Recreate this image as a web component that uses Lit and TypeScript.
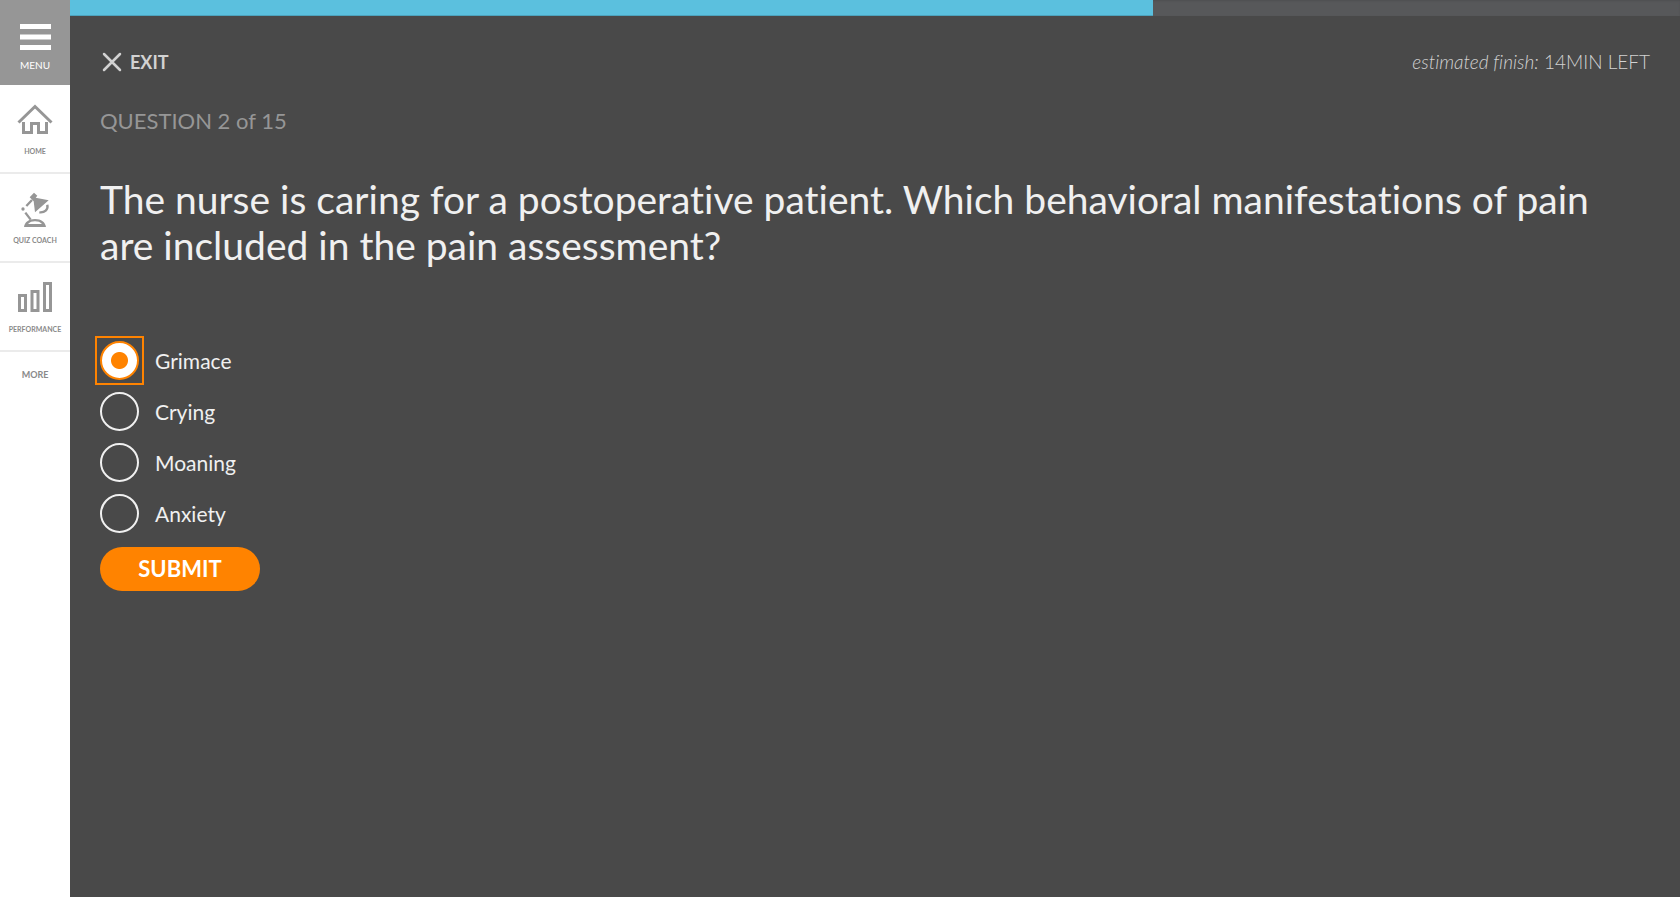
import { LitElement, html, css, svg } from "lit";
import { customElement, property, state } from "lit/decorators.js";
import { styleMap } from "lit/directives/style-map.js";

const homeIcon = svg`<svg width="36" height="32" viewBox="0 0 36 32" fill="none" stroke="#969696">
  <path stroke-width="3" d="M1.5 19.5 18 3.5 34.5 19.5"/>
  <path stroke-width="3" d="M6.5 19V29.500H14.500V20.500H21.500V29.500H29.500V19"/>
</svg>`;

const lampIcon = svg`<svg width="30" height="36" viewBox="60 60 90 108" fill="#969696">
  <path d="M89 76 102 62 112 71 107 77 146 85 105 121 101 88 95 82Z"/>
  <path fill="none" stroke="#969696" stroke-width="7" d="M142 98C145 113 134 123 118 121"/>
  <path fill="none" stroke="#969696" stroke-width="7" d="M96 84 79 102M76 122 92 143"/>
  <circle cx="69" cy="111" r="5"/>
  <path fill-rule="evenodd" d="M72 165C74 150 86 141 105 141S136 150 138 165ZM84 156H126C120 150 114 148 105 148S90 150 84 156Z"/>
</svg>`;

const barsIcon = svg`<svg width="36" height="32" viewBox="0 0 36 32" fill="none" stroke="#969696" stroke-width="3">
  <path d="M2.500 14.500H8.500V29.500H2.500ZM15 10.500H21V29.500H15ZM27.500 2.500H33.500V29.500H27.500Z"/>
</svg>`;

@customElement("side-nav")
class SideNav extends LitElement {
  static styles = css`
    :host { display: flex; flex-direction: column; background: #fff; color: #8a8a8a; }
    .menu {
      display: flex; flex-direction: column; align-items: center;
      height: 85px; padding: 24px 0 0; border: 0;
      background: #969696; color: #fff;
      font: 10px/16px Lato, sans-serif; gap: 6px; cursor: pointer;
    }
    .item {
      display: flex; flex-direction: column; align-items: center; justify-content: space-between;
      box-sizing: border-box; height: 89px; padding: 18px 0 16px;
      border-bottom: 2px solid #ebebeb;
      color: inherit; text-decoration: none;
      font: 700 7px/10px Lato, sans-serif; white-space: nowrap;
    }
    .item:first-of-type { padding-bottom: 16px; }
    .more {
      padding: 15px 0; border: 0; background: none; color: inherit;
      font: 700 9px/16px Lato, sans-serif; cursor: pointer;
    }
    svg { display: block; }
  `;
  render() {
    return html`
      <button class="menu">
        <svg width="31" height="27" viewBox="0 0 31 27" fill="#fff">
          <path d="M0 0H31V5H0ZM0 10.500H31V15.500H0ZM0 21H31V26H0Z"/>
        </svg>
        MENU
      </button>
      <a class="item" href="#home">${homeIcon}HOME</a>
      <a class="item" href="#coach">${lampIcon}QUIZ COACH</a>
      <a class="item" href="#performance">${barsIcon}PERFORMANCE</a>
      <button class="more">MORE</button>
    `;
  }
}

@customElement("quiz-progress")
class QuizProgress extends LitElement {
  @property({ type: Number }) value = 0;
  static styles = css`
    :host { display: block; height: 16px; background: #57585a; box-shadow: inset 0 1px 2px rgba(0, 0, 0, 0.1); }
    .bar { height: 100%; background: #5bc0de; box-shadow: inset 0 -1px 0 rgba(0, 0, 0, 0.15); }
  `;
  render() {
    return html`<div class="bar" style=${styleMap({ width: `${this.value}%` })}></div>`;
  }
}

@customElement("app-root")
class AppRoot extends LitElement {
  @state() private selected = "Grimace";
  private options = ["Grimace", "Crying", "Moaning", "Anxiety"];

  static styles = css`
    :host {
      display: grid; grid-template-columns: 70px minmax(0, 1fr);
      min-height: 100vh; background: #494949; color: #f0f0f0;
      font-family: Lato, sans-serif; font-variant-ligatures: none;
    }
    .content { padding: 30px 30px 40px; }
    .top { display: flex; justify-content: space-between; align-items: center; height: 32px; }
    .exit {
      display: flex; align-items: center; gap: 8px; padding: 0 2px; border: 0;
      background: none; color: #d2d2d2; font: 700 18px/24px Lato, sans-serif; cursor: pointer;
    }
    .time { color: #d2d2d2; font-size: 19px; line-height: 24px; font-weight: 300; }
    .count { margin: 28px 0 0; color: #969696; font-size: 22px; line-height: 30px; font-weight: 400; }
    .question { margin: 40px 0 0; font-size: 39px; line-height: 46px; font-weight: 400; }
    .options { display: grid; gap: 12px; margin: 73px 0 14px; padding: 0; border: 0; justify-content: start; }
    .option { display: flex; align-items: center; gap: 16px; font-size: 21px; line-height: 24px; cursor: pointer; }
    .ring { display: flex; }
    .ring:has(.radio:checked) { outline: 2px solid #ff8300; outline-offset: 3px; }
    .radio {
      appearance: none; box-sizing: border-box; width: 39px; height: 39px; margin: 0;
      border: 2px solid #f0f0f0; border-radius: 50%; outline: none; cursor: pointer;
    }
    .radio:checked {
      border-color: #ff8300;
      background: radial-gradient(circle, #ff8300 8px, #fff 9px);
    }
    .submit {
      display: block; width: 160px; height: 44px; padding: 0; border: 0; border-radius: 22px;
      background: #ff8300; color: #fff; font: 700 22px/44px Lato, sans-serif; cursor: pointer;
    }
  `;

  render() {
    return html`
      <side-nav></side-nav>
      <main>
        <quiz-progress .value=${67.27}></quiz-progress>
        <div class="content">
          <div class="top">
            <button class="exit">
              <svg width="20" height="20" viewBox="0 0 20 20" fill="none" stroke="#d2d2d2" stroke-width="2.500" stroke-linecap="round">
                <path d="M2 2 18 18M18 2 2 18"/>
              </svg>
              EXIT
            </button>
            <div class="time"><em>estimated finish:</em> 14MIN LEFT</div>
          </div>
          <p class="count">QUESTION 2 of 15</p>
          <h1 class="question" id="question">
            The nurse is caring for a postoperative patient. Which behavioral manifestations of pain are included in the pain assessment?
          </h1>
          <fieldset class="options" aria-labelledby="question">
            ${this.options.map(
              (name) => html`<label class="option">
                <span class="ring">
                  <input class="radio" type="radio" name="answer" .checked=${this.selected === name}
                    @change=${() => (this.selected = name)} />
                </span>
                ${name}
              </label>`
            )}
          </fieldset>
          <button class="submit">SUBMIT</button>
        </div>
      </main>
    `;
  }
}
